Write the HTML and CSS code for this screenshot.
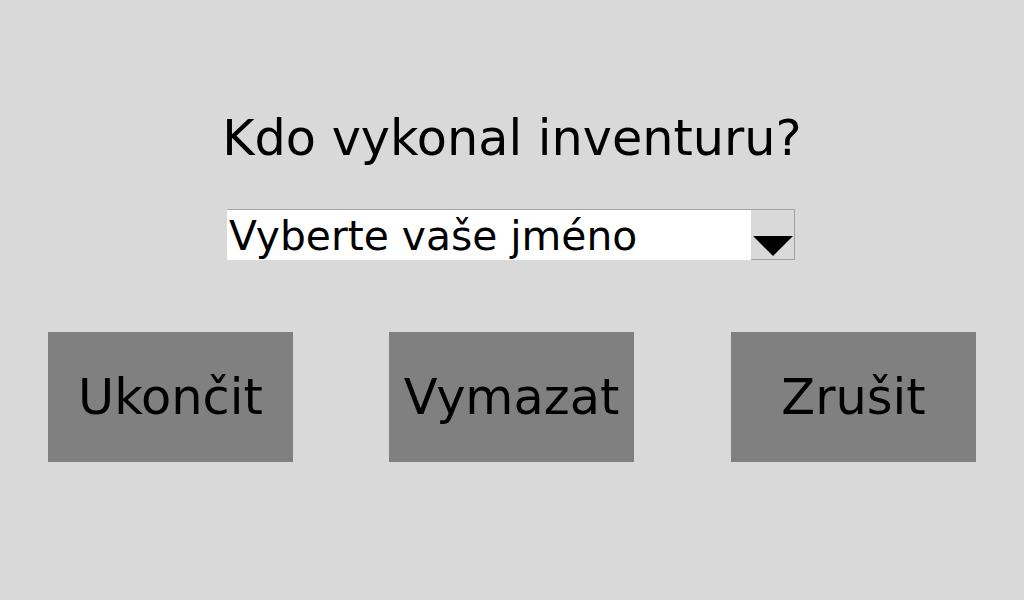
FILE: index.html
```html
<!DOCTYPE html>
<html lang="cs">
<head>
<meta charset="utf-8">
<title>Inventura</title>
<link rel="stylesheet" href="styles.css">
</head>
<body>
<main class="screen">
  <h1 class="title">Kdo vykonal inventuru?</h1>
  <div class="select">
    <span class="select-text">Vyberte vaše jméno</span>
    <span class="select-btn"><svg width="40" height="21" viewBox="0 0 40 21"><polygon points="0,0 40,0 20,20" fill="#000"/></svg></span>
  </div>
  <div class="actions">
    <button class="btn">Ukončit</button>
    <button class="btn">Vymazat</button>
    <button class="btn">Zrušit</button>
  </div>
</main>
</body>
</html>
```
FILE: styles.css
```css
html, body {
  margin: 0;
  padding: 0;
  background: #d9d9d9;
}
body {
  width: 1024px;
  height: 600px;
  overflow: hidden;
  font-family: "DejaVu Sans", sans-serif;
  color: #000;
}
.screen {
  display: flex;
  flex-direction: column;
  align-items: center;
  padding-top: 109px;
}
.title {
  margin: 0;
  font-size: 49.3px;
  font-weight: normal;
  line-height: 58px;
  height: 58px;
}
.select {
  margin-top: 42px;
  width: 568px;
  height: 51px;
  box-sizing: border-box;
  background: #fff;
  border-top: 1px solid #a6a6a6;
  display: flex;
  margin-left: -2px;
}
.select-text {
  flex: 1;
  font-size: 40.8px;
  line-height: 52px;
  padding-left: 2px;
}
.select-btn {
  width: 44px;
  box-sizing: border-box;
  background: #d9d9d9;
  border-right: 1px solid #a0a0a0;
  border-bottom: 1px solid #a0a0a0;
  display: flex;
  align-items: flex-end;
  justify-content: center;
  padding-bottom: 2px;
}
.select-btn svg {
  display: block;
}
.actions {
  align-self: stretch;
  display: flex;
  padding: 0 48px;
  margin-top: 72px;
  gap: 96px;
}
.btn {
  width: 245px;
  height: 130px;
  border: none;
  background: #808080;
  font-family: "DejaVu Sans", sans-serif;
  font-size: 49.4px;
  color: #000;
  padding: 0;
  margin: 0;
}
.btn:last-child {
  margin-left: 1px;
}
```
